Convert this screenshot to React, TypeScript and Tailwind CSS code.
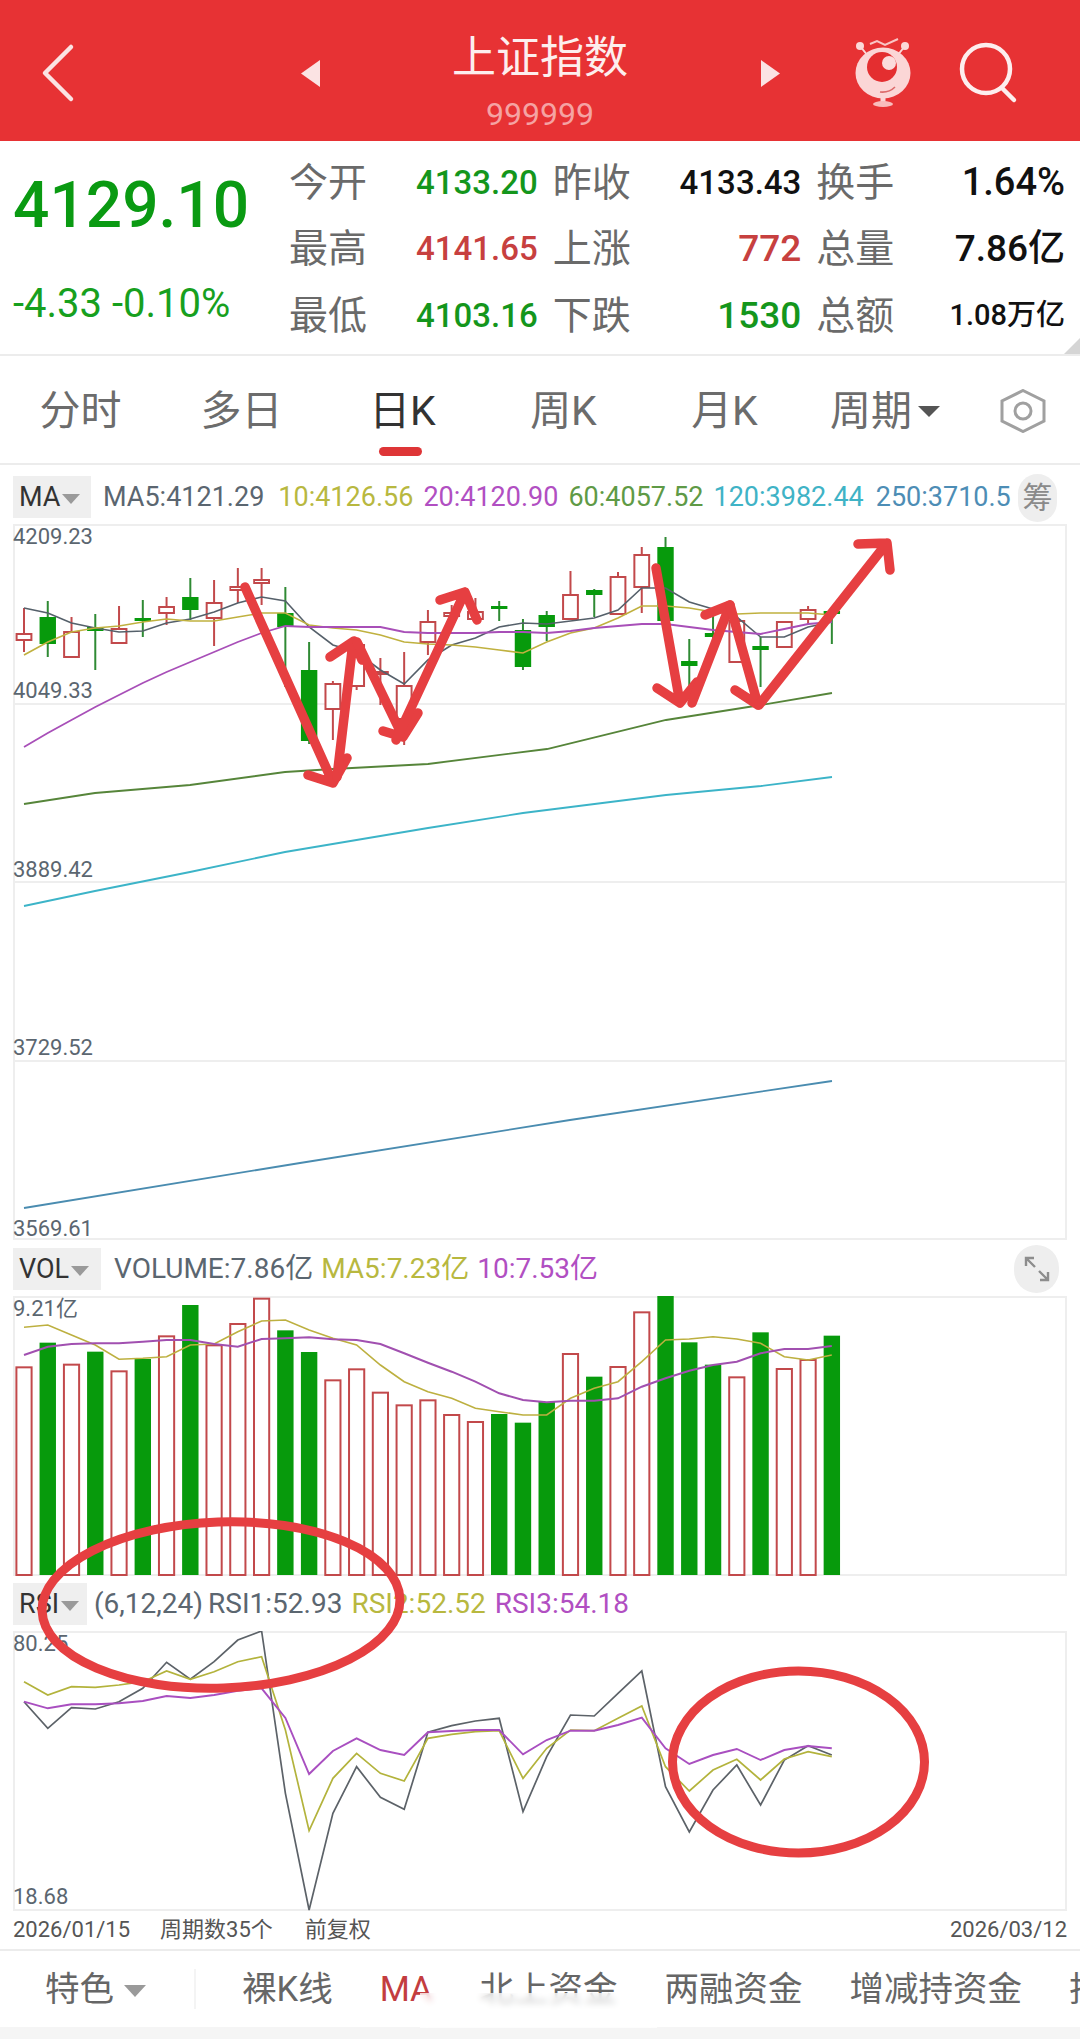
import React from "react";

const X = (i: number) => 24 + i * 23.76;
const GREEN = "#079a0c";
const RED = "#c2494b";
const ANNOT = "#e63f41";

// [wickTop, bodyTop, bodyBottom, wickBottom, isGreen] in page px
const C: [number, number, number, number, number][] = [
  [608, 633, 641, 652, 0], [601, 617, 644, 657, 1], [617, 631, 658, 658, 0], [614, 627, 631, 670, 1],
  [606, 628, 644, 644, 0], [600, 618, 621, 637, 1], [597, 606, 614, 625, 0], [578, 597, 610, 620, 1],
  [580, 602, 619, 646, 0], [568, 586, 591, 603, 0], [568, 579, 584, 605, 0], [587, 613, 627, 687, 1],
  [642, 670, 741, 744, 1], [681, 683, 710, 740, 0], [643, 644, 687, 690, 0], [658, 671, 675, 705, 0],
  [652, 685, 720, 745, 0], [610, 621, 643, 655, 0], [605, 612, 617, 620, 0], [598, 611, 620, 622, 0],
  [601, 606, 609, 621, 1], [619, 630, 667, 670, 1], [611, 615, 627, 641, 1], [571, 594, 620, 620, 0],
  [589, 590, 595, 617, 1], [572, 576, 615, 615, 0], [547, 554, 588, 613, 0], [537, 547, 621, 630, 1],
  [639, 661, 666, 690, 1], [610, 633, 637, 645, 1], [620, 620, 663, 663, 0], [637, 646, 650, 687, 1],
  [621, 621, 648, 648, 0], [606, 609, 620, 625, 0], [610, 611, 614, 644, 1],
];

const MA5 = [608, 613, 623, 628, 632, 631, 623, 619, 612, 603, 597, 601, 627, 645, 652, 670, 684, 660, 645, 638, 627, 623, 624, 621, 618, 610, 588, 588, 602, 609, 617, 637, 637, 627, 622];
const MA10 = [655, 642, 632, 628, 626, 622, 619, 621, 621, 617, 613, 613, 625, 628, 630, 635, 642, 644, 645, 647, 650, 653, 642, 633, 628, 618, 606, 606, 608, 612, 614, 613, 613, 613, 615];
const MA20 = [747, 733, 720, 707, 695, 683, 672, 662, 652, 642, 633, 626, 627, 627, 627, 627, 632, 633, 633, 633, 632, 632, 633, 631, 628, 626, 624, 624, 627, 630, 632, 634, 629, 624, 622];
const MA60: [number, number][] = [[24, 804], [95, 793], [190, 785], [285, 772], [333, 769], [428, 764], [547, 749], [666, 720], [761, 705], [832, 693]];
const MA120: [number, number][] = [[24, 906], [95, 891], [190, 872], [285, 852], [428, 828], [523, 813], [666, 795], [761, 786], [832, 777]];
const MA250: [number, number][] = [[24, 1208], [300, 1163], [570, 1120], [832, 1081]];

const VOL: [number, number][] = [[382, 0], [308, 1], [374, 0], [335, 1], [394, 0], [357, 1], [289, 0], [195, 1], [316, 0], [252, 0], [176, 0], [271, 1], [336, 1], [421, 0], [388, 0], [458, 0], [496, 0], [481, 0], [525, 0], [546, 0], [522, 1], [548, 1], [486, 1], [342, 0], [410, 1], [381, 0], [217, 0], [168, 1], [307, 1], [374, 1], [412, 0], [277, 1], [387, 0], [360, 0], [287, 1]];
const VM5 = [262, 255, 285, 315, 358, 355, 350, 315, 312, 275, 243, 240, 270, 295, 315, 375, 425, 455, 475, 505, 515, 525, 525, 475, 445, 425, 365, 300, 297, 290, 297, 310, 350, 360, 345];
const VM10 = [345, 320, 312, 310, 310, 305, 300, 300, 312, 320, 297, 295, 292, 298, 300, 312, 340, 368, 395, 425, 460, 480, 487, 482, 482, 475, 440, 415, 392, 375, 365, 340, 327, 327, 318];

const R1 = [425, 505, 443, 447, 425, 385, 307, 358, 305, 240, 213, 700, 1050, 760, 620, 712, 748, 517, 497, 483, 475, 755, 590, 465, 468, 400, 333, 680, 816, 690, 615, 735, 600, 557, 585];
const R2 = [365, 405, 380, 382, 375, 365, 333, 358, 335, 305, 290, 510, 812, 655, 580, 640, 663, 535, 523, 515, 512, 655, 565, 510, 512, 475, 438, 620, 693, 630, 598, 660, 597, 575, 590];
const R3 = [425, 445, 433, 433, 430, 423, 408, 414, 405, 392, 385, 474, 642, 573, 535, 570, 585, 517, 513, 510, 510, 583, 540, 512, 512, 495, 473, 565, 612, 585, 567, 600, 570, 558, 565];

const line = (ys: number[], f: (y: number) => number) => ys.map((y, i) => `${X(i).toFixed(1)},${f(y).toFixed(1)}`).join(" ");
const pts = (a: [number, number][]) => a.map((p) => p.join(",")).join(" ");

function Tri({ className, color = "#9a9a9a" }: { className: string; color?: string }) {
  return (
    <svg viewBox="0 0 22 12" className={`shrink-0 ${className}`} preserveAspectRatio="none">
      <polygon points="0,0 22,0 11,12" fill={color} />
    </svg>
  );
}

function Stat({ label, value, cls }: { label: string; value: React.ReactNode; cls: string }) {
  return (
    <div className="flex items-center justify-between h-[66.5px]">
      <span className="text-[39px] leading-none text-[#6a6a6a] pt-[2px]">{label}</span>
      <span className={`leading-none font-medium whitespace-nowrap ${cls}`}>{value}</span>
    </div>
  );
}

function IndicatorLabel({ text, w }: { text: string; w: string }) {
  return (
    <div className={`${w} h-[42px] bg-[#efefef] flex items-center pl-[6px] gap-[2px] shrink-0`}>
      <span className="text-[27px] leading-none text-[#333]">{text}</span>
      <Tri className="w-[18px] h-[10px] mt-[3px]" />
    </div>
  );
}

export default function App() {
  return (
    <div className="relative w-[1080px] h-[2039px] bg-white overflow-hidden font-['Roboto','Noto_Sans_CJK_SC',sans-serif]">
      {/* Header */}
      <header className="relative h-[141px] bg-[#e73234] flex items-start justify-center">
        <svg className="absolute left-[40px] top-[43px] w-[36px] h-[60px]" viewBox="0 0 36 60" fill="none">
          <path d="M31 4 L5 30 L31 56" stroke="#fbe3e3" strokeWidth="4.5" strokeLinecap="round" strokeLinejoin="round" />
        </svg>
        <svg className="w-[19px] h-[27px] mt-[60px]" viewBox="0 0 19 27">
          <polygon points="19,0 19,27 0,13.5" fill="#fbe3e3" />
        </svg>
        <div className="w-[441px] pt-[36px] flex flex-col items-center">
          <span className="text-[44px] leading-none text-[#fdeeee]">上证指数</span>
          <span className="text-[32px] leading-none text-[#f5a3a3] mt-[18px]">999999</span>
        </div>
        <svg className="w-[19px] h-[27px] mt-[60px]" viewBox="0 0 19 27">
          <polygon points="0,0 0,27 19,13.5" fill="#fbe3e3" />
        </svg>
        <svg className="absolute left-[850px] top-[30px] w-[66px] h-[82px]" viewBox="850 30 66 82" fill="none">
          <path d="M870 44 L877 41 L885 45 L898 39" stroke="#f9c5c5" strokeWidth="2" />
          <path d="M860 46 L868 56 M905 46 L897 56" stroke="#fbd9d9" strokeWidth="2" />
          <circle cx="860" cy="46" r="4" fill="#fbd9d9" />
          <circle cx="905" cy="46" r="4" fill="#fbd9d9" />
          <ellipse cx="883" cy="73" rx="27.5" ry="25.5" fill="#fbd6d6" />
          <circle cx="882" cy="67" r="15" fill="#e42e30" />
          <circle cx="889" cy="63" r="7" fill="#fbdcdc" />
          <path d="M880 92 Q889 93 895 87" stroke="#dc6a6a" strokeWidth="1.6" />
          <path d="M883 98 V102" stroke="#fbd6d6" strokeWidth="5" />
          <ellipse cx="883" cy="104" rx="10" ry="3" fill="#f9bcbc" />
        </svg>
        <svg className="absolute left-[955px] top-[38px] w-[66px] h-[68px]" viewBox="955 38 66 68" fill="none">
          <circle cx="986" cy="69" r="24" stroke="#fdeeee" strokeWidth="4.5" />
          <path d="M1002 88 L1014 100" stroke="#fdeeee" strokeWidth="4.5" strokeLinecap="round" />
        </svg>
      </header>

      {/* Quote stats */}
      <section className="relative h-[215px] border-b-2 border-[#ececec] flex">
        <div className="w-[289px] pl-[13px] flex flex-col shrink-0">
          <span className="mt-[41px] text-[64px] leading-[48px] font-medium text-[#0a9a12]">4129.10</span>
          <span className="mt-[60px] text-[40px] leading-[28px] text-[#17a01e] whitespace-nowrap">-4.33 -0.10%</span>
        </div>
        <div className="w-[776px] pt-[8px] grid grid-cols-3 gap-x-[15px] content-start">
          <Stat label="今开" value="4133.20" cls="text-[33px] text-[#14961c]" />
          <Stat label="昨收" value="4133.43" cls="text-[33px] text-[#111]" />
          <Stat label="换手" value="1.64%" cls="text-[38px] text-[#111]" />
          <Stat label="最高" value="4141.65" cls="text-[33px] text-[#c7403f]" />
          <Stat label="上涨" value="772" cls="text-[37px] text-[#c7403f]" />
          <Stat label="总量" value="7.86亿" cls="text-[37px] text-[#111]" />
          <Stat label="最低" value="4103.16" cls="text-[33px] text-[#14961c]" />
          <Stat label="下跌" value="1530" cls="text-[37px] text-[#14961c]" />
          <Stat label="总额" value="1.08万亿" cls="text-[29px] text-[#111]" />
        </div>
        <svg className="absolute right-0 bottom-0 w-[16px] h-[16px]" viewBox="0 0 16 16">
          <polygon points="16,0 16,16 0,16" fill="#d5d5d5" />
        </svg>
      </section>

      {/* Period tabs */}
      <nav className="relative h-[109px] border-b-2 border-[#ececec] flex pt-[3px]">
        {["分时", "多日", "日K", "周K", "月K"].map((t, i) => (
          <div key={t} className="relative w-[161px] flex items-center justify-center">
            <span className={`text-[41px] leading-none ${i === 2 ? "text-[#333]" : "text-[#6c6c6c]"}`}>{t}</span>
            {i === 2 && <div className="absolute left-[57px] top-[88px] w-[43px] h-[9px] rounded-full bg-[#de3537]" />}
          </div>
        ))}
        <div className="w-[194px] pl-[25px] flex items-center gap-[6px]">
          <span className="text-[41px] leading-none text-[#6c6c6c]">周期</span>
          <Tri className="w-[22px] h-[11px]" color="#555" />
        </div>
        <div className="flex items-center">
          <svg className="w-[48px] h-[44px]" viewBox="0 0 48 44" fill="none" stroke="#a0a0a0" strokeWidth="3">
            <polygon points="24,1.5 45,12 45,32 24,42.5 3,32 3,12" />
            <circle cx="24" cy="22" r="8" />
          </svg>
        </div>
      </nav>

      {/* MA legend */}
      <div className="h-[59px] px-[13px] pt-[11px] flex items-start">
        <IndicatorLabel text="MA" w="w-[78px]" />
        <div className="ml-[12px] w-[911px] h-[42px] flex items-center gap-[10px] whitespace-nowrap text-[27px] leading-none">
          <span className="text-[#5b6670] mr-[4px]">MA5:4121.29</span>
          <span className="text-[#b8b83f]">10:4126.56</span>
          <span className="text-[#b14fc2]">20:4120.90</span>
          <span className="text-[#5f9a46]">60:4057.52</span>
          <span className="text-[#3fb3c6]">120:3982.44</span>
          <span className="text-[#4d8db5] ml-[2px]">250:3710.5</span>
        </div>
        <div className="ml-[4px] mt-[-2px] w-[39px] h-[48px] rounded-full bg-[#eeeeee] flex items-center justify-center">
          <span className="text-[30px] leading-none text-[#8a8a8a]">筹</span>
        </div>
      </div>

      {/* Candle chart */}
      <div className="relative mx-[13px] h-[716px] border-x-2 border-[#eeeeee] border-t-2 grid grid-rows-4 box-border">
        <div className="border-b-2 border-[#eeeeee]" />
        <div className="border-b-2 border-[#eeeeee]" />
        <div className="border-b-2 border-[#eeeeee]" />
        <div className="border-b-2 border-[#eeeeee]" />
        <svg className="absolute left-[-2px] top-[-2px] w-[1054px] h-[716px]" viewBox="13 524 1054 716" fill="none">
          {C.map(([wt, bt, bb, wb, g], i) => {
            const c = g ? GREEN : RED;
            return (
              <g key={i}>
                <line x1={X(i)} x2={X(i)} y1={wt} y2={wb} stroke={g ? "#2f8a34" : RED} strokeWidth="2" />
                {g ? (
                  <rect x={X(i) - 8.2} y={bt} width="16.4" height={bb - bt} fill={c} />
                ) : (
                  <rect x={X(i) - 7.4} y={bt + 1} width="14.8" height={bb - bt - 2} fill="#fff" stroke={c} strokeWidth="2" />
                )}
              </g>
            );
          })}
          <polyline points={line(MA5, (y) => y)} stroke="#55606a" strokeWidth="1.6" />
          <polyline points={line(MA10, (y) => y)} stroke="#c0b13f" strokeWidth="1.6" />
          <polyline points={line(MA20, (y) => y)} stroke="#a84fb8" strokeWidth="1.8" />
          <polyline points={pts(MA60)} stroke="#56853a" strokeWidth="1.8" />
          <polyline points={pts(MA120)} stroke="#3cb4c8" strokeWidth="1.8" />
          <polyline points={pts(MA250)} stroke="#4a8cb0" strokeWidth="1.8" />
        </svg>
        <span className="absolute left-[-2px] top-[0px] text-[22px] leading-none text-[#5b6670]">4209.23</span>
        <span className="absolute left-[-2px] top-[154px] text-[22px] leading-none text-[#5b6670]">4049.33</span>
        <span className="absolute left-[-2px] top-[333px] text-[22px] leading-none text-[#5b6670]">3889.42</span>
        <span className="absolute left-[-2px] top-[511px] text-[22px] leading-none text-[#5b6670]">3729.52</span>
        <span className="absolute left-[-2px] top-[692px] text-[22px] leading-none text-[#5b6670]">3569.61</span>
      </div>

      {/* VOL legend */}
      <div className="h-[56px] px-[13px] pt-[8px] flex items-start">
        <IndicatorLabel text="VOL" w="w-[88px]" />
        <div className="ml-[13px] h-[42px] flex items-center gap-[8px] whitespace-nowrap text-[28px] leading-none">
          <span className="text-[#5b6670]">VOLUME:7.86亿</span>
          <span className="text-[#b8b83f]">MA5:7.23亿</span>
          <span className="text-[#b14fc2]">10:7.53亿</span>
        </div>
        <div className="ml-auto mr-[8px] mt-[-3px] w-[45px] h-[48px] rounded-full bg-[#eeeeee] flex items-center justify-center">
          <svg className="w-[28px] h-[28px]" viewBox="0 0 28 28" fill="none" stroke="#8d8d8d" strokeWidth="2.4">
            <path d="M3 11 V3 H11 M3 3 L12 12 M25 17 V25 H17 M25 25 L16 16" />
          </svg>
        </div>
      </div>

      {/* Volume chart */}
      <div className="relative mx-[13px] h-[280px] border-2 border-[#eeeeee]">
        <svg className="absolute left-[-2px] top-[-2px] w-[1054px] h-[280px]" viewBox="13 1296 1054 280" fill="none">
          {VOL.map(([t, g], i) => {
            const top = 1240 + t / 3;
            const bot = 1575;
            return g ? (
              <rect key={i} x={X(i) - 8.2} y={top} width="16.4" height={bot - top} fill={GREEN} />
            ) : (
              <rect key={i} x={X(i) - 7.6} y={top} width="15.2" height={bot - top} fill="#fff" stroke={RED} strokeWidth="2" />
            );
          })}
          <polyline points={line(VM5, (y) => 1240 + y / 3)} stroke="#bdb040" strokeWidth="1.6" />
          <polyline points={line(VM10, (y) => 1240 + y / 3)} stroke="#a150b0" strokeWidth="2" />
        </svg>
        <span className="absolute left-[-2px] top-[0px] text-[22px] leading-none text-[#5b6670]">9.21亿</span>
      </div>

      {/* RSI legend */}
      <div className="h-[55px] px-[13px] pt-[7px] flex items-start">
        <IndicatorLabel text="RSI" w="w-[74px]" />
        <div className="ml-[7px] h-[42px] flex items-center gap-[9px] whitespace-nowrap text-[28px] leading-none">
          <span className="text-[#5b6670]">(6,12,24)<span className="ml-[5px]">RSI1:52.93</span></span>
          <span className="text-[#b8b83f]">RSI2:52.52</span>
          <span className="text-[#b14fc2]">RSI3:54.18</span>
        </div>
      </div>

      {/* RSI chart */}
      <div className="relative mx-[13px] h-[280px] border-2 border-[#eeeeee]">
        <svg className="absolute left-[-2px] top-[-2px] w-[1054px] h-[280px]" viewBox="13 1631 1054 280" fill="none">
          <polyline points={line(R1, (y) => 1560 + y / 3)} stroke="#5c6268" strokeWidth="1.7" />
          <polyline points={line(R2, (y) => 1560 + y / 3)} stroke="#b3b33c" strokeWidth="1.7" />
          <polyline points={line(R3, (y) => 1560 + y / 3)} stroke="#a94fc0" strokeWidth="1.9" />
        </svg>
        <span className="absolute left-[-2px] top-[0px] text-[22px] leading-none text-[#5b6670]">80.25</span>
        <span className="absolute left-[-2px] top-[253px] text-[22px] leading-none text-[#5b6670]">18.68</span>
      </div>

      {/* Date row */}
      <div className="h-[38px] px-[13px] flex items-center text-[22px] leading-none text-[#555] whitespace-nowrap">
        <span>2026/01/15</span>
        <span className="ml-[30px]">周期数35个</span>
        <span className="ml-[32px]">前复权</span>
        <span className="ml-auto">2026/03/12</span>
      </div>

      {/* Bottom nav */}
      <div className="relative h-[78px] border-t-2 border-[#ececec] pl-[45px] flex items-center whitespace-nowrap overflow-hidden text-[34.5px] leading-none text-[#666]">
        <span className="shrink-0">特色</span>
        <Tri className="ml-[10px] w-[22px] h-[12px] mt-[3px]" />
        <div className="ml-[48px] w-[2px] h-[40px] bg-[#f4f4f4] shrink-0" />
        <div className="ml-[46px] flex gap-[47px] shrink-0">
          <span>裸K线</span>
          <span className="text-[#c33d3f]">MA</span>
          <span>北上资金</span>
          <span>两融资金</span>
          <span>增减持资金</span>
          <span>技</span>
        </div>
      </div>
      <div className="h-[12px] bg-[#f5f5f5]" />

      {/* Watermark smear over the bottom nav */}
      <div className="absolute left-[420px] top-[1993px] w-[237px] h-[35px] bg-white/70 backdrop-blur-[3px]" />

      {/* Hand-drawn annotations on top of the screenshot */}
      <svg className="absolute left-0 top-0 w-[1080px] h-[2039px] pointer-events-none" viewBox="0 0 1080 2039" fill="none">
        <g stroke={ANNOT} strokeWidth="9.5" strokeLinecap="round" strokeLinejoin="round">
          <path d="M245 587 L333 783 M308 775 L333 783 L347 758" />
          <path d="M337 777 L353 642 M330 657 L354 641 L362 660" />
          <path d="M357 642 L403 737 M383 731 L403 737 L418 713" />
          <path d="M396 740 L465 592 M440 600 L465 592 L477 620" />
          <path d="M656 568 L680 703 M657 688 L680 703 L697 682" />
          <path d="M692 703 L730 605 M705 615 L730 605" />
          <path d="M730 605 L758 705 M735 690 L758 705" />
          <path d="M759 705 L887 543 M858 544 L887 543 L890 570" />
        </g>
        <ellipse cx="221" cy="1605" rx="179" ry="83" stroke={ANNOT} strokeWidth="9" transform="rotate(-2 221 1605)" />
        <ellipse cx="798.5" cy="1762" rx="126" ry="91" stroke={ANNOT} strokeWidth="9" />
      </svg>
    </div>
  );
}
